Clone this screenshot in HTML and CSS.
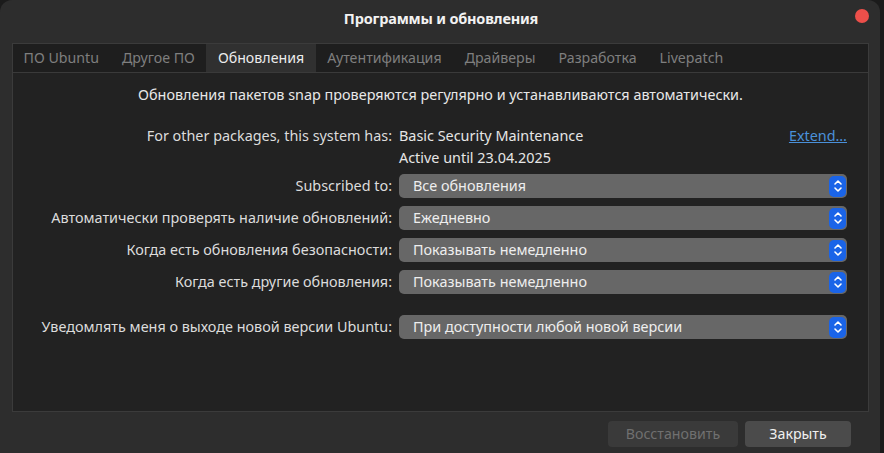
FILE: index.html
```html
<!DOCTYPE html>
<html lang="ru">
<head>
  <meta charset="UTF-8">
  <meta name="viewport" content="width=device-width, initial-scale=1.0">
  <title>Программы и обновления</title>
  <link rel="stylesheet" href="styles.css">
</head>
<body>

  <div class="window">
    <!-- Title bar -->
    <div class="titlebar">
      <div class="title">Программы и обновления</div>
      <button type="button" class="close-button" aria-label="Закрыть"></button>
    </div>

    <!-- Notebook -->
    <div class="notebook">
      <div class="tabs">
        <div class="tab">ПО Ubuntu</div>
        <div class="tab">Другое ПО</div>
        <div class="tab active">Обновления</div>
        <div class="tab">Аутентификация</div>
        <div class="tab">Драйверы</div>
        <div class="tab">Разработка</div>
        <div class="tab">Livepatch</div>
      </div>

      <div class="page">
        <p class="intro">Обновления пакетов snap проверяются регулярно и устанавливаются автоматически.</p>

        <div class="settings">
          <div class="row info-row">
            <div class="label">For other packages, this system has:</div>
            <div class="value">
              <span>Basic Security Maintenance</span>
              <a href="#" class="extend-link">Extend…</a>
            </div>
          </div>
          <div class="row info-row second">
            <div class="label"></div>
            <div class="value">Active until 23.04.2025</div>
          </div>

          <div class="row combo-row first">
            <div class="label">Subscribed to:</div>
            <div class="combo">
              <span>Все обновления</span>
              <span class="combo-arrow"><svg width="10" height="14" viewBox="0 0 10 14"><path d="M2 5 L5 2 L8 5 M2 9 L5 12 L8 9" fill="none" stroke="#fff" stroke-width="1.6" stroke-linecap="round" stroke-linejoin="round"/></svg></span>
            </div>
          </div>
          <div class="row combo-row">
            <div class="label">Автоматически проверять наличие обновлений:</div>
            <div class="combo">
              <span>Ежедневно</span>
              <span class="combo-arrow"><svg width="10" height="14" viewBox="0 0 10 14"><path d="M2 5 L5 2 L8 5 M2 9 L5 12 L8 9" fill="none" stroke="#fff" stroke-width="1.6" stroke-linecap="round" stroke-linejoin="round"/></svg></span>
            </div>
          </div>
          <div class="row combo-row">
            <div class="label">Когда есть обновления безопасности:</div>
            <div class="combo">
              <span>Показывать немедленно</span>
              <span class="combo-arrow"><svg width="10" height="14" viewBox="0 0 10 14"><path d="M2 5 L5 2 L8 5 M2 9 L5 12 L8 9" fill="none" stroke="#fff" stroke-width="1.6" stroke-linecap="round" stroke-linejoin="round"/></svg></span>
            </div>
          </div>
          <div class="row combo-row">
            <div class="label">Когда есть другие обновления:</div>
            <div class="combo">
              <span>Показывать немедленно</span>
              <span class="combo-arrow"><svg width="10" height="14" viewBox="0 0 10 14"><path d="M2 5 L5 2 L8 5 M2 9 L5 12 L8 9" fill="none" stroke="#fff" stroke-width="1.6" stroke-linecap="round" stroke-linejoin="round"/></svg></span>
            </div>
          </div>
          <div class="row combo-row spaced">
            <div class="label">Уведомлять меня о выходе новой версии Ubuntu:</div>
            <div class="combo">
              <span>При доступности любой новой версии</span>
              <span class="combo-arrow"><svg width="10" height="14" viewBox="0 0 10 14"><path d="M2 5 L5 2 L8 5 M2 9 L5 12 L8 9" fill="none" stroke="#fff" stroke-width="1.6" stroke-linecap="round" stroke-linejoin="round"/></svg></span>
            </div>
          </div>
        </div>
      </div>
    </div>

    <!-- Dialog buttons -->
    <div class="actions">
      <button type="button" class="dialog-button" disabled>Восстановить</button>
      <button type="button" class="dialog-button">Закрыть</button>
    </div>
  </div>

</body>
</html>
```

FILE: styles.css
```css
* {
  margin: 0;
  padding: 0;
  box-sizing: border-box;
  font-family: "Noto Sans", "DejaVu Sans", sans-serif;
}

html, body {
  height: 100%;
}

body {
  background-color: #1b1b1b;
  overflow: hidden;
}

.window {
  width: 880px;
  height: 453px;
  background-color: #2d2d2d;
  border-radius: 12px 12px 0 0;
  display: flex;
  flex-direction: column;
  color: #e6e6e6;
}

.titlebar {
  height: 36px;
  flex-shrink: 0;
  display: flex;
  align-items: center;
  justify-content: center;
  position: relative;
}

.title {
  font-size: 14.5px;
  font-weight: bold;
  color: #f2f2f2;
  letter-spacing: -0.2px;
  margin-left: 2px;
}

.close-button {
  position: absolute;
  right: 11px;
  top: 9px;
  width: 14px;
  height: 14px;
  border-radius: 50%;
  border: none;
  background-color: #ec4f4a;
}

.notebook {
  flex: 1;
  margin: 7px 11px 0 12px;
  border: 1px solid #3b3b3b;
  display: flex;
  flex-direction: column;
}

.tabs {
  height: 29px;
  flex-shrink: 0;
  display: flex;
  background-color: #1e1e1e;
  border-bottom: 1px solid #3a3a3a;
}

.tab {
  padding: 0 11.5px 1px;
  display: flex;
  align-items: center;
  font-size: 14.2px;
  color: #7f7f7f;
}

.tab:first-child {
  padding-left: 10.5px;
}

.tab.active {
  background-color: #303030;
  color: #ececec;
}

.page {
  flex: 1;
  background-color: #222222;
  font-size: 14.4px;
}

.intro {
  text-align: center;
  line-height: 18px;
  margin-top: 13px;
  color: #e8e8e8;
}

.settings {
  margin-top: 22px;
  padding-right: 21px;
  display: flex;
  flex-direction: column;
}

.row {
  display: flex;
  align-items: center;
  line-height: 18px;
}

.label {
  width: 386px;
  flex-shrink: 0;
  text-align: right;
  padding-right: 7px;
  color: #dcdcdc;
}

.info-row {
  height: 20px;
}

.info-row.second {
  margin-top: 2px;
}

.value {
  flex: 1;
  display: flex;
  justify-content: space-between;
  color: #e6e6e6;
}

.extend-link {
  color: #4a90d9;
  text-decoration: underline;
}

.combo-row {
  margin-top: 8px;
}

.combo-row.first {
  margin-top: 6px;
}

.combo-row.spaced {
  margin-top: 21px;
}

.combo {
  flex: 1;
  height: 24px;
  background-color: #676767;
  border-radius: 5px;
  display: flex;
  align-items: center;
  justify-content: space-between;
  padding: 0 1px 0 14px;
  color: #eeeeee;
}

.combo-arrow {
  width: 17px;
  height: 21px;
  background-color: #1a64e8;
  border-radius: 5px;
  display: flex;
  align-items: center;
  justify-content: center;
}

.actions {
  height: 41px;
  flex-shrink: 0;
  display: flex;
  justify-content: flex-end;
  align-items: center;
  gap: 7px;
  padding-right: 29px;
  padding-top: 2px;
}

.dialog-button {
  height: 26px;
  border: none;
  border-radius: 4px;
  background-color: #4b4b4b;
  color: #f0f0f0;
  font-family: "Noto Sans", sans-serif;
  font-size: 14.2px;
  width: 106px;
}

.dialog-button:disabled {
  width: 130px;
  background-color: #3a3a3a;
  color: #707070;
}
```
